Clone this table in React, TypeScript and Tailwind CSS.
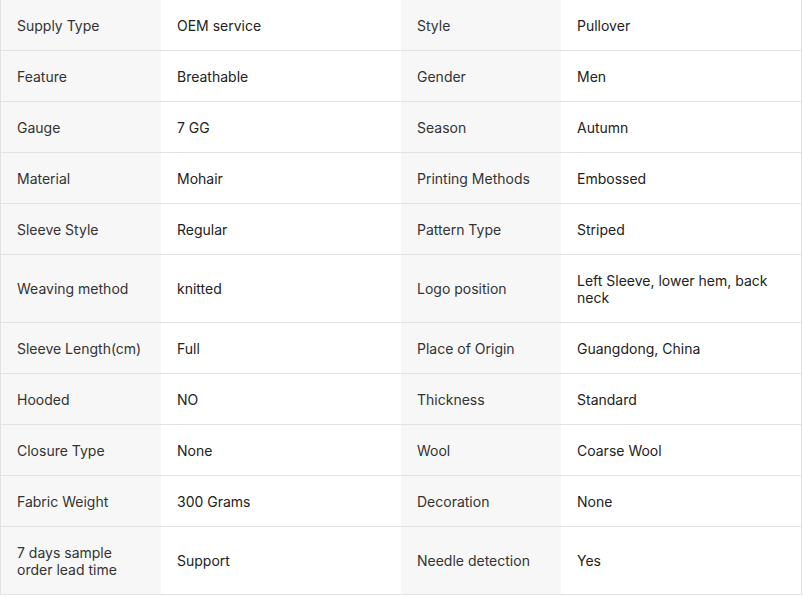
const rows: [string, string, string, string][] = [
  ["Supply Type", "OEM service", "Style", "Pullover"],
  ["Feature", "Breathable", "Gender", "Men"],
  ["Gauge", "7 GG", "Season", "Autumn"],
  ["Material", "Mohair", "Printing Methods", "Embossed"],
  ["Sleeve Style", "Regular", "Pattern Type", "Striped"],
  ["Weaving method", "knitted", "Logo position", "Left Sleeve, lower hem, back neck"],
  ["Sleeve Length(cm)", "Full", "Place of Origin", "Guangdong, China"],
  ["Hooded", "NO", "Thickness", "Standard"],
  ["Closure Type", "None", "Wool", "Coarse Wool"],
  ["Fabric Weight", "300 Grams", "Decoration", "None"],
  ["7 days sample order lead time", "Support", "Needle detection", "Yes"],
];

function Label({ text }: { text: string }) {
  return (
    <div className="w-[160px] shrink-0 bg-[#f7f7f7] px-4 py-[16.5px] flex items-center text-[#333]">
      {text}
    </div>
  );
}

function Value({ text }: { text: string }) {
  return (
    <div className="w-[240px] shrink-0 bg-white px-4 py-[16.5px] flex items-center text-[#222]">
      {text}
    </div>
  );
}

export default function App() {
  return (
    <div
      className="w-[803px] h-[597px] bg-white"
      style={{ fontFamily: "Inter, 'Noto Sans', sans-serif" }}
    >
      <div className="w-[802px] border-l border-r border-[#e2e2e2] text-[14px] leading-[17px]">
        {rows.map((r, i) => (
          <div key={i} className="flex border-b border-[#e2e2e2]">
            <Label text={r[0]} />
            <Value text={r[1]} />
            <Label text={r[2]} />
            <Value text={r[3]} />
          </div>
        ))}
      </div>
    </div>
  );
}
